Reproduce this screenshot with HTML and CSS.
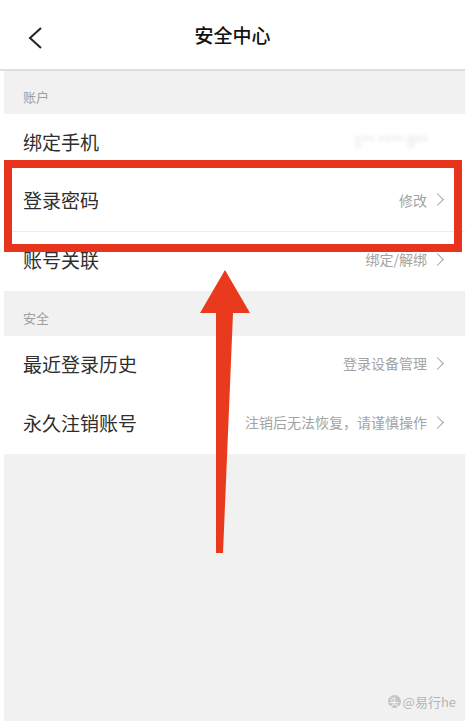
FILE: index.html
```html
<!DOCTYPE html>
<html lang="zh-CN">
<head>
  <meta charset="UTF-8" />
  <meta name="viewport" content="width=device-width, initial-scale=1.0" />
  <title>安全中心</title>
  <link rel="stylesheet" href="styles.css">
</head>
<body>
  <header class="topbar">
    <span class="back">
      <svg width="16" height="22" viewBox="0 0 16 22"><path d="M14 1 L3 11 L14 21" fill="none" stroke="#222" stroke-width="2"/></svg>
    </span>
    <h1>安全中心</h1>
  </header>
  <main class="page">
    <div class="group-title">账户</div>
    <div class="row">
      <span class="name">绑定手机</span>
      <span class="value blurred">1** **** 0**</span>
    </div>
    <div class="row line">
      <span class="name">登录密码</span>
      <span class="value">修改 <i class="chev"></i></span>
    </div>
    <div class="row">
      <span class="name">账号关联</span>
      <span class="value">绑定/解绑 <i class="chev"></i></span>
    </div>
    <div class="group-title tall">安全</div>
    <div class="row">
      <span class="name">最近登录历史</span>
      <span class="value">登录设备管理 <i class="chev"></i></span>
    </div>
    <div class="row">
      <span class="name">永久注销账号</span>
      <span class="value">注销后无法恢复，请谨慎操作 <i class="chev"></i></span>
    </div>
    <div class="filler">
      <div class="mark"><span class="logo">头</span>@易行he</div>
    </div>
  </main>

  <!-- annotation overlay -->
  <div class="highlight"></div>
  <svg class="arrow" width="465" height="721" viewBox="0 0 465 721">
    <polygon points="225,270 200,313 216,313 216,553 223,553 233,313 250,313" fill="#ea3a1e"/>
  </svg>
</body>
</html>
```

FILE: styles.css
```css
body {
  margin: 0;
  background: #fff;
  font-family: "Noto Sans CJK SC", "Noto Sans", sans-serif;
  width: 465px;
  height: 721px;
  overflow: hidden;
  position: relative;
}
.topbar {
  display: flex;
  align-items: center;
  justify-content: center;
  position: relative;
  border-bottom: 2px solid #dedede;
  box-sizing: border-box;
  height: 71px;
}
.topbar h1 {
  margin: 0;
  font-size: 19px;
  font-weight: 500;
  color: #111;
}
.back {
  position: absolute;
  left: 27px;
  top: 27px;
}
.page {
  margin-left: 4px;
  height: 650px;
  display: flex;
  flex-direction: column;
}
.group-title {
  height: 43px;
  flex-shrink: 0;
  background: #f1f1f1;
  color: #a0a0a0;
  font-size: 13px;
  padding: 16px 0 0 19px;
  box-sizing: border-box;
}
.group-title.tall {
  height: 45px;
  padding-top: 17px;
}
.row {
  height: 59px;
  flex-shrink: 0;
  box-sizing: border-box;
  display: flex;
  align-items: center;
  justify-content: space-between;
  padding: 0 23px 5px 19px;
  background: #fff;
}
.row.line {
  border-bottom: 1px solid #ececec;
}
.name {
  font-size: 19px;
  color: #2e2e2e;
}
.value {
  font-size: 14px;
  color: #a3a3a3;
  display: flex;
  align-items: center;
}
.chev {
  display: inline-block;
  width: 8px;
  height: 8px;
  border-top: 1.5px solid #a3a3a3;
  border-right: 1.5px solid #a3a3a3;
  transform: rotate(45deg);
  margin-left: 6px;
}
.blurred {
  color: #d8d8d8;
  filter: blur(2px);
  margin-right: 14px;
}
.filler {
  flex: 1;
  background: #f1f1f1;
  position: relative;
}
.mark {
  position: absolute;
  right: 9px;
  bottom: 10px;
  font-size: 13px;
  color: #b4b4b4;
  display: flex;
  align-items: center;
  gap: 2px;
}
.logo {
  font-size: 10px;
  color: #fff;
  background: #c4c4c4;
  border-radius: 50%;
  width: 13px;
  height: 13px;
  display: inline-flex;
  align-items: center;
  justify-content: center;
}
.highlight {
  position: absolute;
  left: 4px;
  top: 160px;
  width: 458px;
  height: 92px;
  border: 8px solid #e8341d;
  box-sizing: border-box;
}
.arrow {
  position: absolute;
  left: 0;
  top: 0;
}
```
